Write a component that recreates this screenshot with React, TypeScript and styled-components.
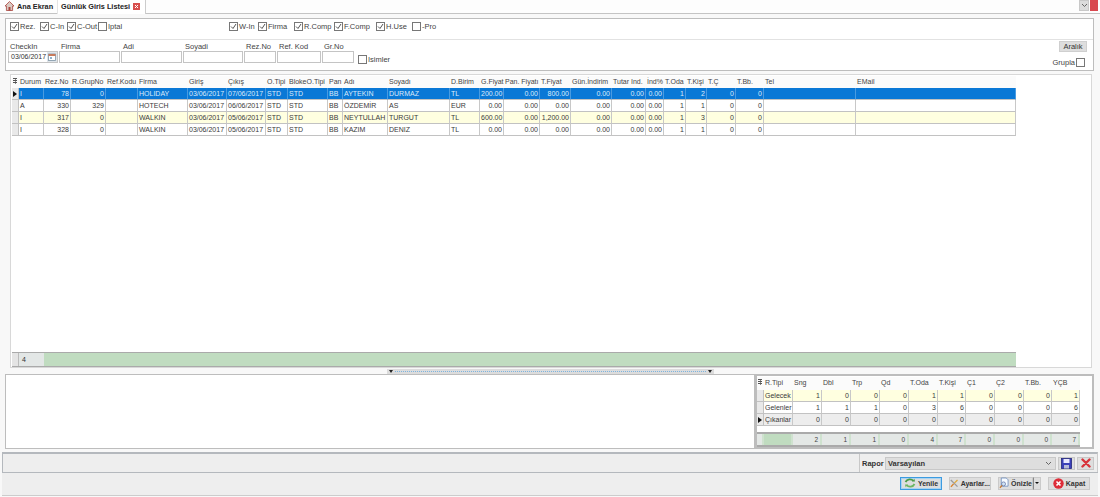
import React from "react";
import styled, { createGlobalStyle } from "styled-components";

const Global = createGlobalStyle`
  html, body { margin: 0; padding: 0; background: #f8f8f8; }
  body { font-family: "Liberation Sans", Arial, sans-serif; font-size: 7px; color: #3a3a3a; overflow: hidden; }
  #root { width: 1100px; height: 497px; }
  * { box-sizing: border-box; }
`;

const Page = styled.div`
  width: 1100px; height: 497px; display: flex; flex-direction: column; overflow: hidden;
`;

/* ---------- Tabs ---------- */
const TabBar = styled.div`
  height: 14px; display: flex; align-items: flex-end; border-bottom: 1px solid #c4c4c4; padding-left: 4px; position: relative; flex: none; background: #fdfdfd;
`;
const Tab = styled.div<{ $active?: boolean }>`
  height: ${p => (p.$active ? 14 : 13)}px; display: flex; align-items: center; gap: 3px; font-weight: bold; font-size: 7.3px; color: #222;
  padding: 0 ${p => (p.$active ? 5 : 3)}px 1px ${p => (p.$active ? 3 : 1)}px; margin-left: ${p => (p.$active ? 1 : 0)}px;
  background: ${p => (p.$active ? "#fff" : "transparent")};
  border-right: ${p => (p.$active ? "1px solid #ccc" : "none")};
  border-left: ${p => (p.$active ? "1px solid #e4e4e4" : "none")};
  margin-bottom: ${p => (p.$active ? -1 : 0)}px;
`;
const WinButtons = styled.div`
  position: absolute; right: 2px; top: 0; display: flex; gap: 1px;
`;
const WinBtn = styled.div<{ $red?: boolean }>`
  width: ${p => (p.$red ? 8 : 10)}px; height: 11px; background: ${p => (p.$red ? "#d9484f" : "#dcdcdc")}; border: 1px solid ${p => (p.$red ? "#d9484f" : "#c8c8c8")};
  display: flex; align-items: center; justify-content: center;
`;

/* ---------- Filter ---------- */
const FilterPanel = styled.div`
  margin: 4px 6px 0 5px; height: 53px; flex: none; border: 1px solid #bdbdbd; background: #fff;
`;
const CheckRow = styled.div`
  height: 21px; display: flex; align-items: center; padding: 0 0 5px 4px; border-bottom: 1px solid #e2e2e2;
`;
const CheckItem = styled.label<{ $w: number }>`
  width: ${p => p.$w}px; flex: none; display: flex; align-items: center; gap: 1px; font-size: 7.5px; color: #444; white-space: nowrap;
`;
const Box = styled.span`
  width: 9px; height: 9px; border: 1px solid #777; background: #fff; display: inline-flex; align-items: center; justify-content: center; flex: none;
`;
const Gap = styled.div<{ $w: number }>`
  width: ${p => p.$w}px; flex: none;
`;
const FieldRow = styled.div`
  display: flex; padding: 2px 0 0 2px; position: relative; height: 30px;
`;
const Field = styled.div<{ $w: number }>`
  width: ${p => p.$w}px; flex: none; display: flex; flex-direction: column; margin-right: 1px;
`;
const FieldLabel = styled.div`
  height: 9px; line-height: 9px; font-size: 7.5px; color: #444; padding-left: 2px;
`;
const Input = styled.div`
  height: 12px; border: 1px solid #c4c4c4; background: #fff; font-size: 7px; line-height: 10px; padding-left: 2px; color: #333; display: flex; justify-content: space-between; align-items: center;
`;
const CalBtn = styled.span`
  width: 10px; height: 10px; background: #dfe5ea; display: flex; align-items: center; justify-content: center;
`;
const NamesCheck = styled.label`
  display: flex; align-items: center; gap: 1px; margin: 12px 0 0 3px; height: 10px; font-size: 7.5px; color: #444;
`;
const SideTools = styled.div`
  position: absolute; right: 6px; top: 1px; display: flex; flex-direction: column; align-items: flex-end; gap: 6px;
`;
const SmallBtn = styled.div`
  width: 28px; height: 11px; background: #dedede; border: 1px solid #cfcfcf; font-size: 7.5px; color: #333; text-align: center; line-height: 9px;
`;
const GroupCheck = styled.label`
  display: flex; align-items: center; gap: 1px; font-size: 7.5px; color: #444; padding-right: 2px;
`;

/* ---------- Main grid ---------- */
const GridPanel = styled.div`
  margin: 3px 8px 0 10px; height: 294px; flex: none; border: 1px solid #d8d8d8; background: #fff; padding: 1px 0 0 1px; display: flex; flex-direction: column;
`;
const mainCols = "7px 25px 27px 35px 32px 50px 39px 39px 22px 40px 15px 45px 62px 30px 24px 36px 31px 41px 34px 18px 22px 21px 29px 28px 92px 160px";
const sumCols = "7px 29px 29px 29px 29px 29px 29px 28px 29px 29px 28px 28px";

const GridRow = styled.div<{ $cols: string; $bg?: string; $fg?: string; $h?: number }>`
  display: grid; grid-template-columns: ${p => p.$cols}; height: ${p => p.$h ?? 12}px; flex: none;
  width: max-content;
  background: ${p => p.$bg ?? "#fff"}; color: ${p => p.$fg ?? "#3a3a3a"};
`;
const HeadCell = styled.div`
  font-size: 7px; line-height: 11px; padding-left: 1px; white-space: nowrap; overflow: hidden; color: #444; background: #fbfbfb;
`;
const Cell = styled.div<{ $right?: boolean; $line: string }>`
  font-size: 7px; line-height: 11px; white-space: nowrap; overflow: hidden; padding: 0 1px;
  text-align: ${p => (p.$right ? "right" : "left")};
  border-right: 1px solid ${p => p.$line}; border-bottom: 1px solid #c2c2c2;
`;
const Indicator = styled.div`
  background: #e9e9e9; border-right: 1px solid #c2c2c2; border-bottom: 1px solid #c2c2c2; display: flex; align-items: center; justify-content: center; color: #111;
`;
const GridBody = styled.div`
  flex: 1; min-height: 0;
`;
const GridFooter = styled.div`
  height: 15px; width: 1004px; flex: none; display: flex; border-top: 1px solid #aaa; border-bottom: 1px solid #aaa; background: #c0dcc0;
`;
const FootMark = styled.div`
  width: 7px; background: #e4e4e4; border-right: 1px solid #bbb;
`;
const FootCount = styled.div`
  width: 25px; background: #e3e7e6; font-size: 7px; line-height: 13px; padding-left: 3px; color: #333;
`;

const Splitter = styled.div`
  width: 327px; height: 5px; margin: 1px 0 0 387px; flex: none; background: #dcdcdc; display: flex; align-items: center; justify-content: space-between; padding: 0 2px; gap: 2px;
`;
const SplitDots = styled.div`
  flex: 1; height: 1px; border-top: 1px dotted #7db4df;
`;
const SplitArrow = styled.div`
  width: 4px; height: 3px; background: #222; clip-path: polygon(0 0, 100% 0, 50% 100%);
`;

/* ---------- Bottom ---------- */
const BottomArea = styled.div`
  height: 75px; flex: none; display: flex; margin: 0 6px 0 5px;
`;
const NotesPanel = styled.div`
  width: 750px; flex: none; border: 1px solid #bdbdbd; background: #fff;
`;
const SummaryPanel = styled.div`
  flex: 1; border: 2px solid #bdbdbd; background: #fff; padding: 1px 0 0 0; display: flex; flex-direction: column;
`;
const SummaryFooter = styled.div`
  margin-top: 6px; width: 323px; height: 15px; border-top: 2px solid #aaa; border-bottom: 2px solid #aaa; display: flex; background: #e4ebe6;
`;
const SumFootCell = styled.div<{ $w: number; $green?: boolean }>`
  width: ${p => p.$w}px; flex: none; font-size: 6.5px; line-height: 11px; text-align: right; padding-right: 2px; color: #444;
  background: ${p => (p.$green ? "#c0dcc0" : "#e4e8e6")}; border-right: 2px solid #cfe2cf;
`;

const RaporBar = styled.div`
  height: 20px; margin: 3px 2px 0 2px; flex: none; background: #eeeeee; border-top: 2px solid #b4b8bd; border-left: 1px solid #b4b8bd; border-right: 1px solid #ccc; display: flex; justify-content: flex-end; align-items: center; padding-right: 3px;
`;
const RaporBox = styled.div`
  display: flex; align-items: center; height: 18px; border-left: 1px solid #c8c8c8; padding-left: 2px; gap: 2px;
`;
const RaporLabel = styled.span`
  font-weight: bold; font-size: 7.5px; color: #333; width: 21px;
`;
const Combo = styled.div`
  width: 171px; height: 13px; background: #dedede; border: 1px solid #c8c8c8; font-weight: bold; font-size: 7.5px; line-height: 11px; padding: 0 3px 0 2px; color: #333; display: flex; justify-content: space-between; align-items: center;
`;
const IconBtn = styled.div`
  width: 17px; height: 13px; background: #dedede; border: 1px solid #c8c8c8; display: flex; align-items: center; justify-content: center;
`;
const ActionBar = styled.div`
  height: 24px; margin: 0 2px; flex: none; background: #eeeeee; border-top: 1px solid #b4b8bd; border-bottom: 1px solid #ccc; display: flex; justify-content: flex-end; align-items: center; padding: 0 8px 2px 0; gap: 7px;
`;
const ActionBtn = styled.div<{ $w: number; $focus?: boolean }>`
  width: ${p => p.$w}px; height: 13px; background: #dedede; border: 1px solid ${p => (p.$focus ? "#3c9be0" : "#cacaca")}; ${p => (p.$focus ? "box-shadow: inset 0 0 0 1px #a9d4f2;" : "")}
  display: flex; align-items: center; justify-content: center; gap: 2px; font-weight: bold; font-size: 7px; color: #333; white-space: nowrap;
`;
const SplitBtn = styled.div`
  display: flex; gap: 0;
`;
const Caret = styled.div`
  width: 8px; height: 13px; background: #dedede; border: 1px solid #cacaca; border-left: 1px solid #888; display: flex; align-items: center; justify-content: center;
`;
const CaretShape = styled.span`
  width: 4px; height: 2px; background: #111; clip-path: polygon(0 0, 100% 0, 50% 100%);
`;

/* ---------- Icons ---------- */
const Check = () => (
  <svg width="7" height="7" viewBox="0 0 7 7"><path d="M1 3.5 L3 5.5 L6 1" fill="none" stroke="#555" strokeWidth="1" /></svg>
);
const HomeIcon = () => (
  <svg width="9" height="10" viewBox="0 0 9 10"><path d="M4.5 .5 L9 5 H7.6 V9.5 H1.4 V5 H0 Z" fill="#d9c8c0" stroke="#a8423c" strokeWidth=".8" /><rect x="3.5" y="6" width="2" height="3.5" fill="#a8423c" /></svg>
);
const TabClose = () => (
  <svg width="7" height="7" viewBox="0 0 7 7"><rect width="7" height="7" fill="#d8504e" /><path d="M2 2 L5 5 M5 2 L2 5" stroke="#fff" strokeWidth="1" /></svg>
);
const CalIcon = () => (
  <svg width="8" height="8" viewBox="0 0 8 8"><rect x=".5" y="1" width="7" height="6.5" fill="#fff" stroke="#7d93a5" strokeWidth=".8" /><rect x=".5" y="1" width="7" height="2" fill="#c77b5c" /><rect x="2" y="4" width="2" height="2" fill="#8fb1cc" /></svg>
);
const SaveIcon = () => (
  <svg width="11" height="11" viewBox="0 0 11 11"><rect x=".5" y=".5" width="10" height="10" fill="#3a3fb8" stroke="#23267a" strokeWidth=".8" /><rect x="2.5" y="1" width="6" height="4" fill="#e8e8ff" /><rect x="3" y="7" width="5" height="3.5" fill="#b8bbd8" /></svg>
);
const DeleteIcon = () => (
  <svg width="10" height="10" viewBox="0 0 10 10"><path d="M1.5 1.5 L8.5 8.5 M8.5 1.5 L1.5 8.5" stroke="#d8343c" strokeWidth="2.4" strokeLinecap="round" /></svg>
);
const RefreshIcon = () => (
  <svg width="12" height="10" viewBox="0 0 12 10"><path d="M1.5 4 C3 .8 7.5 .6 9.5 3" fill="none" stroke="#4d9c46" strokeWidth="1.8" /><path d="M8 3.6 L11 3.6 L10.4 .8 Z" fill="#4d9c46" /><path d="M10.5 6 C9 9.2 4.5 9.4 2.5 7" fill="none" stroke="#6cb664" strokeWidth="1.8" /><path d="M4 6.4 L1 6.4 L1.6 9.2 Z" fill="#6cb664" /></svg>
);
const ToolsIcon = () => (
  <svg width="11" height="11" viewBox="0 0 11 11"><path d="M1 1 L9.5 9.5" stroke="#9a9a9a" strokeWidth="1.6" /><path d="M9.5 1 L5.5 5" stroke="#e0a93a" strokeWidth="1.6" /><path d="M4.5 6 L1.2 9.8" stroke="#d9822b" strokeWidth="1.8" /></svg>
);
const PreviewIcon = () => (
  <svg width="11" height="12" viewBox="0 0 11 12"><path d="M2.5 .5 H8 L10 2.5 V9.5 H2.5 Z" fill="#f7fbff" stroke="#5d7fb5" strokeWidth=".8" /><circle cx="5" cy="7" r="2.2" fill="#cfe4f6" stroke="#5f6fa0" strokeWidth=".8" /><path d="M3.4 8.8 L1 11.2" stroke="#c9772b" strokeWidth="1.3" /></svg>
);
const KapatIcon = () => (
  <svg width="11" height="11" viewBox="0 0 11 11"><circle cx="5.5" cy="5.5" r="5.2" fill="#dd2c38" /><path d="M3.5 3.5 L7.5 7.5 M7.5 3.5 L3.5 7.5" stroke="#fff" strokeWidth="1.6" /></svg>
);
const ChevronDown = ({ color = "#666" }: { color?: string }) => (
  <svg width="7" height="5" viewBox="0 0 7 5"><path d="M1 1 L3.5 3.5 L6 1" fill="none" stroke={color} strokeWidth="1" /></svg>
);
const RowMark = () => (
  <svg width="4" height="6" viewBox="0 0 4 6"><path d="M0 0 L4 3 L0 6 Z" fill="#111" /></svg>
);
const GripMark = () => (
  <svg width="4" height="6" viewBox="0 0 4 6"><path d="M0 0.5 H4 M0 2.5 H4 M0 4.5 H4" stroke="#555" strokeWidth="1" /><path d="M2.5 0 V6" stroke="#555" strokeWidth=".7" /></svg>
);

/* ---------- Data ---------- */
const headers = ["Durum", "Rez.No", "R.GrupNo", "Ref.Kodu", "Firma", "Giriş", "Çıkış", "O.Tipi", "BlokeO.Tipi", "Pan", "Adı", "Soyadı", "D.Birim", "G.Fiyat", "Pan. Fiyatı", "T.Fiyat", "Gün.İndirim", "Tutar Ind.", "İnd%", "T.Oda", "T.Kişi", "T.Ç", "T.Bb.", "Tel", "EMail"];
const rightCols = new Set([1, 2, 13, 14, 15, 16, 17, 18, 19, 20, 21, 22]);
const rows = [
  { bg: "#0a78d6", fg: "#dbeafa", line: "#4a9be0", mark: true, cells: ["I", "78", "0", "", "HOLIDAY", "03/06/2017", "07/06/2017", "STD", "STD", "BB", "AYTEKIN", "DURMAZ", "TL", "200.00", "0.00", "800.00", "0.00", "0.00", "0.00", "1", "2", "0", "0", "", ""] },
  { bg: "#fff", fg: "#3a3a3a", line: "#c8c8c8", mark: false, cells: ["A", "330", "329", "", "HOTECH", "03/06/2017", "06/06/2017", "STD", "STD", "BB", "ÖZDEMİR", "AS", "EUR", "0.00", "0.00", "0.00", "0.00", "0.00", "0.00", "1", "1", "0", "0", "", ""] },
  { bg: "#ffffe0", fg: "#3a3a3a", line: "#c8c8c8", mark: false, cells: ["I", "317", "0", "", "WALKIN", "03/06/2017", "05/06/2017", "STD", "STD", "BB", "NEYTULLAH", "TURGUT", "TL", "600.00", "0.00", "1,200.00", "0.00", "0.00", "0.00", "1", "3", "0", "0", "", ""] },
  { bg: "#fff", fg: "#3a3a3a", line: "#c8c8c8", mark: false, cells: ["I", "328", "0", "", "WALKIN", "03/06/2017", "05/06/2017", "STD", "STD", "BB", "KAZIM", "DENIZ", "TL", "0.00", "0.00", "0.00", "0.00", "0.00", "0.00", "1", "1", "0", "0", "", ""] },
];
const sumHeaders = ["R.Tipi", "Sng", "Dbl", "Trp", "Qd", "T.Oda", "T.Kişi", "Ç1", "Ç2", "T.Bb.", "YÇB"];
const sumRows = [
  { bg: "#ffffe0", mark: false, cells: ["Gelecek", "1", "0", "0", "0", "1", "1", "0", "0", "0", "1"] },
  { bg: "#fff", mark: false, cells: ["Gelenler", "1", "1", "1", "0", "3", "6", "0", "0", "0", "6"] },
  { bg: "#ededed", mark: true, cells: ["Çıkanlar", "0", "0", "0", "0", "0", "0", "0", "0", "0", "0"] },
];
const sumTotals = ["2", "1", "1", "0", "4", "7", "0", "0", "0", "7"];
const sumWidths = [29, 29, 29, 29, 29, 28, 29, 29, 28, 28];

const checks1: [string, number, boolean][] = [["Rez.", 30, true], ["C-In", 27, true], ["C-Out", 31, true], ["Iptal", 30, false]];
const checks2: [string, number, boolean][] = [["W-In", 29, true], ["Firma", 36, true], ["R.Comp", 40, true], ["F.Comp", 42, true], ["H.Use", 36, true], ["-Pro", 30, false]];

const fields: [string, number][] = [["Firma", 61], ["Adi", 61], ["Soyadi", 60], ["Rez.No", 32], ["Ref. Kod", 44], ["Gr.No", 32]];

export default function App() {
  return (
    <Page>
      <Global />
      <TabBar>
        <Tab><HomeIcon /> Ana Ekran</Tab>
        <Tab $active>Günlük Giris Listesi <TabClose /></Tab>
        <WinButtons>
          <WinBtn><ChevronDown /></WinBtn>
          <WinBtn $red />
        </WinButtons>
      </TabBar>

      <FilterPanel>
        <CheckRow>
          {checks1.map(([t, w, c]) => (
            <CheckItem key={t} $w={w}><Box>{c && <Check />}</Box>{t}</CheckItem>
          ))}
          <Gap $w={101} />
          {checks2.map(([t, w, c]) => (
            <CheckItem key={t} $w={w}><Box>{c && <Check />}</Box>{t}</CheckItem>
          ))}
        </CheckRow>
        <FieldRow>
          <Field $w={50}>
            <FieldLabel>CheckIn</FieldLabel>
            <Input>03/06/2017<CalBtn><CalIcon /></CalBtn></Input>
          </Field>
          {fields.map(([t, w]) => (
            <Field key={t} $w={w}>
              <FieldLabel>{t}</FieldLabel>
              <Input />
            </Field>
          ))}
          <NamesCheck><Box />Isimler</NamesCheck>
          <SideTools>
            <SmallBtn>Aralık</SmallBtn>
            <GroupCheck>Grupla<Box /></GroupCheck>
          </SideTools>
        </FieldRow>
      </FilterPanel>

      <GridPanel>
        <GridRow $cols={mainCols}>
          <HeadCell><GripMark /></HeadCell>
          {headers.map(h => <HeadCell key={h}>{h}</HeadCell>)}
        </GridRow>
        <GridBody>
          {rows.map(r => (
            <GridRow key={r.cells[1]} $cols={mainCols} $bg={r.bg} $fg={r.fg}>
              <Indicator>{r.mark && <RowMark />}</Indicator>
              {r.cells.map((c, i) => (
                <Cell key={i} $right={rightCols.has(i)} $line={r.line}>{c}</Cell>
              ))}
            </GridRow>
          ))}
        </GridBody>
        <GridFooter>
          <FootMark />
          <FootCount>4</FootCount>
        </GridFooter>
      </GridPanel>

      <Splitter>
        <SplitArrow />
        <SplitDots />
        <SplitArrow />
      </Splitter>

      <BottomArea>
        <NotesPanel />
        <SummaryPanel>
          <GridRow $cols={sumCols} $h={13}>
            <HeadCell><GripMark /></HeadCell>
            {sumHeaders.map(h => <HeadCell key={h}>{h}</HeadCell>)}
          </GridRow>
          {sumRows.map(r => (
            <GridRow key={r.cells[0]} $cols={sumCols} $bg={r.bg}>
              <Indicator>{r.mark && <RowMark />}</Indicator>
              {r.cells.map((c, i) => (
                <Cell key={i} $right={i > 0} $line="#c8c8c8">{c}</Cell>
              ))}
            </GridRow>
          ))}
          <SummaryFooter>
            <SumFootCell $w={7} />
            <SumFootCell $w={29} $green />
            {sumTotals.map((t, i) => <SumFootCell key={i} $w={sumWidths[i]}>{t}</SumFootCell>)}
          </SummaryFooter>
        </SummaryPanel>
      </BottomArea>

      <RaporBar>
        <RaporBox>
          <RaporLabel>Rapor</RaporLabel>
          <Combo>Varsayılan<ChevronDown /></Combo>
          <IconBtn><SaveIcon /></IconBtn>
          <IconBtn><DeleteIcon /></IconBtn>
        </RaporBox>
      </RaporBar>
      <ActionBar>
        <ActionBtn $w={42} $focus><RefreshIcon />Yenile</ActionBtn>
        <ActionBtn $w={42}><ToolsIcon />Ayarlar...</ActionBtn>
        <SplitBtn>
          <ActionBtn $w={35}><PreviewIcon />Önizle</ActionBtn>
          <Caret><CaretShape /></Caret>
        </SplitBtn>
        <ActionBtn $w={42}><KapatIcon />Kapat</ActionBtn>
      </ActionBar>
    </Page>
  );
}
